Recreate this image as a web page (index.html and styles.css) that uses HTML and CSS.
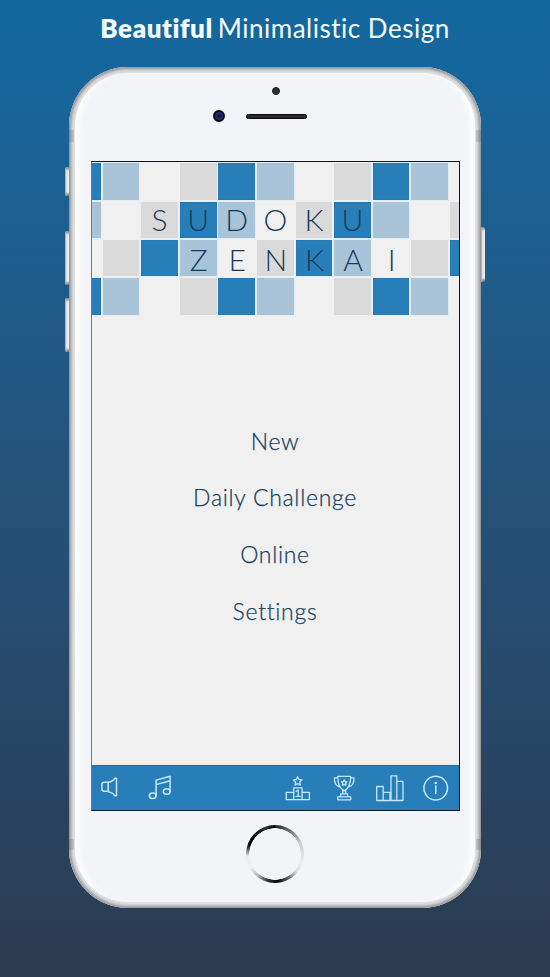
FILE: index.html
```html
<!DOCTYPE html>
<html lang="en">
<head>
<meta charset="utf-8">
<title>Sudoku Zenkai</title>
<link rel="stylesheet" href="styles.css">
</head>
<body>
<h1 class="headline"><strong>Beautiful</strong><span>Minimalistic Design</span></h1>
<main class="device">
  <i class="key key-mute"></i><i class="key key-up"></i><i class="key key-down"></i><i class="key key-power"></i>
  <i class="band band-tl"></i><i class="band band-tr"></i><i class="band band-bl"></i><i class="band band-br"></i>
  <div class="face">
    <div class="sensors"><i class="proximity"></i><div class="ear"><i class="camera"></i><i class="speaker"></i></div></div>
    <section class="screen">
      <div class="tiles">
        <b class="blue"></b><b class="light"></b><b></b><b class="gray"></b><b class="blue"></b><b class="light"></b><b></b><b class="gray"></b><b class="blue"></b><b class="light"></b><b></b>
        <b class="light"></b><b></b><b class="gray">S</b><b class="blue">U</b><b class="light">D</b><b>O</b><b class="gray">K</b><b class="blue">U</b><b class="light"></b><b></b><b class="gray"></b>
        <b class="low"></b><b class="gray low"></b><b class="blue low"></b><b class="light low">Z</b><b class="low">E</b><b class="gray low">N</b><b class="blue low">K</b><b class="light low">A</b><b class="low">I</b><b class="gray low"></b><b class="blue low"></b>
        <b class="blue"></b><b class="light"></b><b></b><b class="gray"></b><b class="blue"></b><b class="light"></b><b></b><b class="gray"></b><b class="blue"></b><b class="light"></b><b></b>
      </div>
      <nav class="menu"><a class="new">New</a><a class="daily">Daily Challenge</a><a class="online">Online</a><a class="settings">Settings</a></nav>
      <footer class="toolbar">
        <svg viewBox="0.8 0.7 368 44">
          <g class="line">
            <path d="M17 17h-4q-2.300 0-2.300 2.500v4q0 2.500 2.300 2.500h4z"/>
            <path d="M17 17q5-1 6.500-4h1.800v17.500h-1.800q-1.500-3-6.500-4"/>
            <ellipse cx="61.500" cy="30.500" rx="3.400" ry="2.800"/><ellipse cx="75.500" cy="26.200" rx="3.400" ry="2.800"/>
            <path d="M64.900 30.500V14.800l14-3.800v15.200M64.900 19.300l14-3.800"/>
          </g>
          <g class="line fine">
            <path d="M206.500 11.500l1.300 2.700 3 .4-2.200 2.100.5 3-2.600-1.400-2.600 1.400.5-3-2.200-2.100 3-.4z"/>
            <path d="M202.500 34.300V22.500h8.400v11.800M202.500 27h-7.500v7.300h23.200V27h-7.300M195 34.300h23.200M205 26l2-1.200v6M204.800 31h4.200"/>
            <path d="M246.500 11h13c0 6-1 12-6.500 14.500-5.500-2.500-6.500-8.500-6.500-14.500zM246.500 12.500h-3.300c0 5 1.500 8.300 5 9M259.500 12.500h3.300c0 5-1.500 8.300-5 9M251.500 25.300v3.200h3v-3.200M249.500 28.500h7v3h-7zM246.500 31.500h13v3h-13z"/>
            <path d="M253 14.500l.9 1.700 1.800.3-1.300 1.400.3 1.900-1.700-.8-1.700.8.3-1.900-1.300-1.400 1.800-.3z"/>
            <path d="M285.500 21.200h6.500v14h-6.500zM292 27h6.800v8.200H292zM299.800 10.500h5.800v24.700h-5.800zM305.600 16h6.200v19.200h-6.200z"/>
          </g>
          <g class="line"><circle cx="344.500" cy="22.800" r="11.800"/><path d="M344.600 20.800v7.500"/></g>
          <circle class="dot" cx="344.600" cy="17.700" r="1.300"/>
        </svg>
      </footer>
    </section>
    <div class="home"></div>
  </div>
</main>
</body>
</html>
```
FILE: styles.css
```css
* { box-sizing: border-box; }
body {
  margin: 0;
  height: 977px;
  overflow: hidden;
  background: linear-gradient(#13689f 0, #17659a 10%, #215985 35%, #27496a 70%, #2b3b50 100%);
  font-family: Lato, "Open Sans", sans-serif;
  font-variant-ligatures: none;
}
.headline {
  display: flex;
  justify-content: center;
  gap: 5px;
  margin: 0;
  height: 67px;
  padding-top: 12px;
  color: #f4fcff;
  font-size: 26px;
  line-height: 33px;
  font-weight: 400;
  white-space: nowrap;
}
.headline strong { font-weight: 800; letter-spacing: .55px; }
.headline span { letter-spacing: .5px; }
.device {
  position: relative;
  width: 412px;
  height: 841px;
  margin: 0 auto;
  padding: 6px;
  border-radius: 59px;
  background: #e5e6e8;
  box-shadow: inset 0 0 3px 2px #929395, inset 0 0 5px 4px #d3d4d6;
}
.face {
  display: flex;
  flex-direction: column;
  align-items: center;
  height: 829px;
  border-radius: 53px;
  background: #f3f4f7;
  box-shadow: inset 8px 0 7px -4px #fff, inset -8px 0 7px -4px #fff, 0 0 1px #d3d4d6;
}
.key {
  position: absolute;
  left: -4px;
  width: 4px;
  border-radius: 2px 0 0 2px;
  background: linear-gradient(#777, #e7e9ec 4px, #e7e9ec calc(100% - 4px), #666);
  box-shadow: inset 1px 0 1px #aaa;
}
.key-mute { top: 100px; height: 29px; }
.key-up { top: 164px; height: 54px; }
.key-down { top: 231px; height: 54px; }
.key-power { top: 160px; left: auto; right: -4px; height: 55px; border-radius: 0 2px 2px 0; }
.band { position: absolute; width: 5px; height: 12px; background: rgba(90, 90, 95, .22); }
.band-tl, .band-tr { top: 63px; }
.band-bl, .band-br { top: 772px; height: 11px; }
.band-tl, .band-bl { left: 0; }
.band-tr, .band-br { right: 0; }
.sensors { width: 128px; height: 88px; padding: 14px 0 0 2px; }
.proximity { display: block; width: 8px; height: 8px; margin: 0 auto; border-radius: 50%; background: #303030; border: 1px solid #181818; }
.ear { display: flex; align-items: center; gap: 21px; margin-top: 15px; }
.camera { width: 12px; height: 12px; border-radius: 50%; border: 2px solid #080a14; background: radial-gradient(circle, #111340 20%, #26307a 60%, #10153f); }
.speaker { width: 61px; height: 5px; border-radius: 3px; background: #292929; border: 1px solid #050505; }
.screen {
  display: flex;
  flex-direction: column;
  width: 369px;
  height: 650px;
  overflow: hidden;
  background: #f0f0f0;
  border: 1px solid #101820;
  border-left-color: #777;
}
.tiles {
  display: grid;
  flex: none;
  grid-template-columns: repeat(11, 36.700px);
  grid-template-rows: repeat(4, 36.400px);
  gap: 1.900px;
  margin: 1.400px 0 0 -27.400px;
}
.tiles b {
  display: flex;
  align-items: center;
  justify-content: center;
  padding-bottom: 2px;
  color: #143c5c;
  font-size: 30px;
  line-height: 34px;
  font-weight: 300;
}
.tiles .low { padding: 2px 0 0 1px; }
.tiles .gray { background: #dadada; }
.tiles .light { background: #a9c3d8; box-shadow: 0 0 0 1px #e2edf5; }
.tiles .blue { background: #287eb8; box-shadow: inset 0 0 1px #0c629c, 0 0 0 1px #def1fc; }
.menu {
  display: flex;
  flex: 1;
  flex-direction: column;
  align-items: center;
  padding-top: 98px;
  color: #173f60;
  font-size: 23px;
  line-height: 56.700px;
  font-weight: 300;
  letter-spacing: .7px;
  -webkit-text-stroke: .25px #173f60;
}
.menu a { height: 56.700px; }
.toolbar { flex: none; height: 45px; border-top: 1px solid #1d6b9f; background: #287eb8; }
.toolbar svg { display: block; width: 368px; height: 44px; }
.line { fill: none; stroke: #c3e8ff; stroke-width: 1.500; stroke-linejoin: round; stroke-linecap: round; }
.fine { stroke-width: 1.300; }
.dot { fill: #c3e8ff; }
.home {
  width: 58px;
  height: 58px;
  margin-top: 14px;
  border-radius: 50%;
  background: radial-gradient(circle, #f3f4f7 25.500px, transparent 26px), conic-gradient(#222 0, #777 35deg, #ccc 65deg, #eee 110deg, #ddd 130deg, #666 150deg, #050505 175deg, #333 195deg, #bbb 220deg, #eee 240deg, #eee 265deg, #777 277deg, #000 290deg, #111 320deg, #333 340deg, #000 360deg);
}
```
